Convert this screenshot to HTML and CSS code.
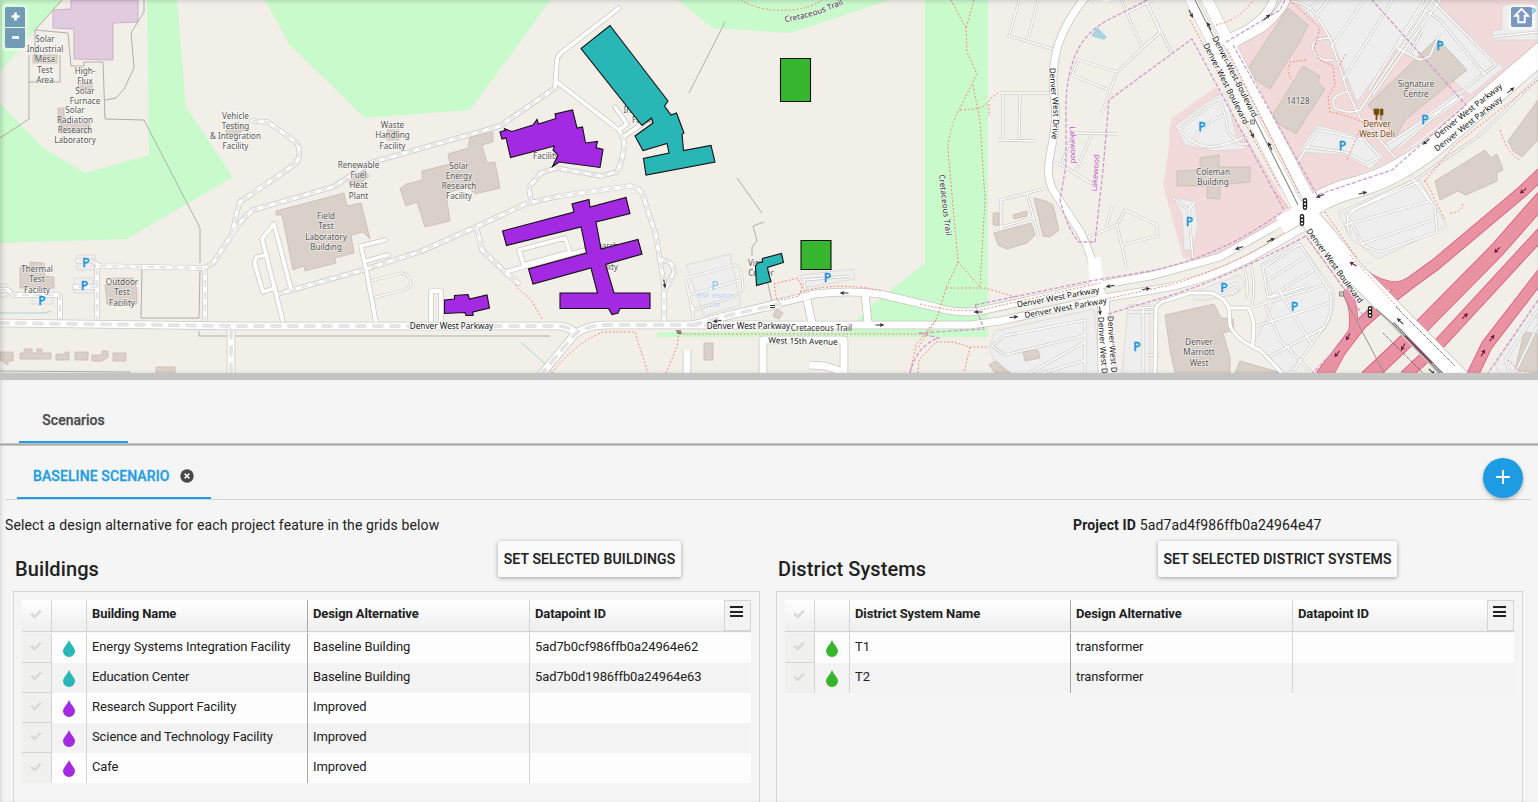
FILE: index.html
```html
<!DOCTYPE html>
<html lang="en">
<head>
<meta charset="utf-8">
<title>Scenarios</title>
<link rel="stylesheet" href="styles.css">
</head>
<body>
<section class="map">
<svg class="map-canvas" width="1538" height="373" viewBox="0 0 1538 373">
<defs>
<g id="arrow"><path d="M-4.5 0H1" stroke="#333" fill="none"/><path d="M4.500 0L0 -2L.6 0L0 2z" fill="#333"/></g>
<g id="ramp-arrow"><path d="M-4 0H1" stroke="#6d1439" fill="none"/><path d="M4 0L0 -2.300L.6 0L0 2.300z" fill="#6d1439"/></g>
<g id="signal"><rect x="-2.200" y="-6" width="4.400" height="12" rx="2" fill="#222"/><circle r="1.100" cy="-3.500" fill="#fff"/><circle r="1.100" fill="#fff"/><circle r="1.100" cy="3.500" fill="#fff"/></g>
<g id="service">
<path d="M274 224L262 239L276 294L283 322M274 224L291 289M267 255L257 257Q254 260 255 265L263 292L275 288"/>
<path d="M376 322L366 269L361 246L385 240M366 261L388 255"/>
<path d="M431 322V291H441V322M505 272L600 246M523 263L519 250L565 238L570 252L523 265"/>
<path d="M555 88L557 60Q558 55 561 53L619 8M557 82L619 130L627 124L615 107M623 137L645 122"/>
</g>
<g id="gated">
<path d="M252 121L268 122L297 143Q300 149 299 156Q298 162 294 165L240 202Q236 212 233 232"/>
<path d="M555 88L500 126L370 163L333 187L253 210Q240 220 229 239L213 263L205 268L100 266L92 261H78M205 268V323M97 268V320M97 287H75M0 290H8L14 295H60V320"/>
<path d="M278 294L363 270L422 251L476 227L525 204L560 196L630 186Q639 187 643 195L656 236L664 285V322M663 260Q674 262 674 272L665 290"/>
<path d="M531 202L529 187L541 173L556 168L601 176L617 172Q624 160 624 140L619 130"/>
<path d="M477 229L482 250L505 272L518 283"/>
</g>
<g id="thin">
<path d="M370 281L402 273Q410 274 411 285L405 290L372 298"/>
<path d="M687 278L735 265Q742 264 743 290Q742 296 692 310L686 280M690 295L740 280M693 322V306M804 280L850 276M804 281L807 300"/>
<path d="M1019 0L1009 36L1053 49M1038 0L1028 39M1000 93H1052M1003 93V139M1020 93L1019 139M997 140L1035 141M1001 200L1047 188M1001 199V229M994 229L1033 218M1027 194L1039 237"/>
<path d="M1121 0L1142 47M1126 13L1153 0M1147 3L1160 32L1117 72L1078 60L1072 75L1109 90M1116 74L1102 113M1076 133L1117 134M1073 133L1062 163M1092 134L1075 173L1094 185L1060 164L1050 161"/>
<path d="M1088 237L1117 225L1125 210L1157 225V236L1122 245M1117 225L1127 269M1112 206L1106 228"/>
<path d="M1145 0L1172 54M1140 50L1160 32"/>
<path d="M1180 129L1210 105L1218 99Q1225 108 1228 132L1239 144H1248M1180 129Q1190 145 1210 147Q1230 145 1248 135M1193 141Q1205 120 1223 116"/>
<path d="M1190 205L1189 215L1193 260M1173 198L1189 210L1195 202"/>
<path d="M1286 0Q1312 4 1318 18L1330 38L1347 90L1360 118L1395 157M1330 38Q1308 38 1314 52Q1320 62 1333 60M1347 92Q1328 96 1335 108Q1350 115 1360 110L1433 0M1343 80L1392 0M1331 47L1364 0M1369 90L1424 0M1373 95L1440 0M1316 15L1328 0M1305 12L1319 0"/>
<path d="M1397 48L1420 60L1430 56L1440 33M1397 48L1422 8L1440 20L1485 75M1422 8L1428 0M1432 0L1496 65L1478 78L1398 148M1410 53L1422 31M1387 144L1462 96M1493 37L1538 32M1507 16L1515 6"/>
<path d="M1292 171L1307 147L1318 130L1365 140L1380 157L1367 163L1345 152L1307 147"/>
<path d="M1345 212L1364 246L1380 252L1437 232L1435 208L1418 182L1358 208Q1342 215 1350 235M1345 225L1430 201M1361 244L1433 220M1350 211L1415 180L1480 135L1538 78M1410 175L1428 200"/>
<path d="M1263 268L1300 244L1330 292Q1335 315 1320 332L1292 373M1263 268L1268 298L1314 270M1268 280L1304 258M1268 298L1310 285M1279 290L1312 345M1253 307L1324 285M1253 327L1329 303M1267 358L1325 327M1265 305L1280 340L1312 373M1241 260Q1250 280 1246 300M1248 258Q1257 280 1252 305"/>
<path d="M992 346L1004 336L1085 320L1085 373M992 346L1005 355L1086 335M1030 373L1085 342M1042 373L1086 360M1128 312H1155L1156 373M1143 307V373M1147 355H1160"/>
<path d="M1538 310L1505 360L1510 373M1538 325L1515 373M1140 308L1155 307M1222 290L1236 283L1238 290L1218 297"/>
</g>
<g id="lots-road"><path d="M1155 373L1156 309Q1158 302 1168 300L1190 293H1212Q1228 300 1229 310L1230 325Q1235 340 1260 350L1282 373M1229 308H1248Q1257 320 1252 348"/></g>
<g id="parkway-gated"><path d="M0 323L240 326H560Q568 327 575 332M540 376L575 334Q585 326 605 325L760 325M231 330V376M693 325L730 315L780 304"/></g>
<g id="residential"><path d="M687 376V350M763 376V340H844V373M809 365L825 366L844 372"/></g>
<g id="parkway"><path d="M735 314L815 294Q850 290 880 294L935 307Q955 314 980 311L1100 285L1150 276L1220 257L1300 212M735 325H970L1000 321L1110 297L1170 287Q1210 278 1250 258L1308 225M865 294L868 323M807 300L812 323"/></g>
<g id="drive"><path d="M1094 -10L1083 0Q1066 22 1058 45Q1051 70 1054 95Q1058 120 1051 150Q1045 175 1053 190L1081 233Q1092 255 1098 285L1105 300L1111 376M1101 290L1102 376"/></g>
<g id="motorway"><path d="M1321 376L1360 325Q1388 298 1435 265L1523 191L1548 167M1405 376L1440 343L1465 316L1548 226M1471 378L1487 345L1548 266"/></g>
<g id="ramps"><path d="M1351 260Q1370 285 1397 286Q1415 282 1440 262L1544 171M1345 290Q1356 305 1353 330L1330 373"/></g>
<path id="motorway-wide" d="M1367 378L1423 325L1497 250L1548 192"/>
</defs>
<rect width="1538" height="373" fill="#f2efe9"/>
<g fill="#c8facc">
<path d="M0 0H62L35 30L0 72zM147 0H177L186 107L233 177L127 239L0 243V103L42 147L85 173L149 155zM265 0L289 44L365 118L470 110L551 0zM678 0L712 28L791 33L889 0zM925 0H988V337H657V332H845L868 308L925 263z"/>
</g>
<path d="M1285 0H1538V45L1395 160L1310 195L1227 50zM1216 87L1172 118Q1168 130 1170 140L1163 185L1183 258L1195 261Q1245 246 1290 210z" fill="#f2dada"/>
<g fill="#eee" stroke="#ddd0d0" stroke-width=".7">
<path d="M686 265L730 254L741 305L704 316zM800 275L853 269L855 279L803 288zM77 255H95V270H77zM74 278H93V293H74zM0 284H8V297H0zM32 297H53V304H32z"/>
<path d="M1175 126L1214 97L1226 92L1236 136L1247 149L1215 151L1185 145L1180 135zM1173 197L1195 202L1198 225L1193 250H1184L1182 215zM1294 0H1435L1503 68L1470 95L1450 78L1440 45L1420 62L1395 50L1357 102L1330 35zM1502 5H1538V40H1493V30H1502zM1305 142L1318 125L1365 138L1384 156L1370 169L1345 155L1300 152zM1385 145L1460 90L1465 98L1390 151z"/>
<path d="M1338 212L1418 177L1447 226L1378 259L1350 238zM1260 265L1298 240L1334 290Q1337 318 1320 335L1285 376L1253 345L1275 300zM995 331L1094 309L1100 376H1000L989 348zM1128 305L1150 304V376H1122zM1194 292L1240 275L1245 285L1235 295L1205 300H1194zM1495 365L1530 313L1538 318V350L1515 376H1500z"/>
</g>
<path d="M71 0H138V22L113 23V60L74 59V29L53 28V10L71 9z" fill="#e1cbdf" stroke="#cdafc9"/>
<g class="building">
<path d="M33 55H57V63H33zM78 83H92V89H78zM58 108H64V123H58zM60 123H90V133H60zM226 130L236 122L246 129L237 134H226zM349 182L364 170L369 176L356 188L349 184zM387 130H399V140H387z"/>
<path d="M276 211L344 193L347 206L361 203L370 239L363 232L351 235L354 253L335 258L336 263L305 271L304 266L293 270L282 215H276zM400 189L406 184L422 180V171L450 164L448 154L468 148L470 137L493 132V142L482 145L487 163L495 162L500 188L475 194L468 187L446 193L450 221L425 227L417 202L406 206z"/>
<path d="M20 267H30V262L44 263L45 276L54 277V288H20zM105 285H113V278H133L137 290V304H107zM0 352H13V361H8V365L0 360zM20 353H24V349H32V353H37V349H42V353H51V359H20zM56 354H65V352H69V360H56zM75 352H88V360H75zM92 355H102V351H108V357L102 361H92zM113 353H126V361H113zM156 367H175V373H156zM704 343H713V360H704zM773 314L777 309L783 313L779 319L774 317z"/>
<path d="M994 233L1031 223L1035 235L1027 243L1007 249L998 245zM1034 198L1046 201L1053 205L1059 230L1050 237L1043 236zM993 213H999V225H993zM1013 215L1027 211V216L1014 219zM1023 352L1038 350L1040 358L1025 361zM989 365L996 361L1010 373H995z"/>
<path d="M1288 8L1308 25L1302 38L1270 89L1245 73zM1303 66L1320 76L1318 82L1325 89L1296 134L1270 119zM1177 171L1200 170V158L1219 155V167H1250V182L1220 185V199L1207 198V186H1177zM1368 105L1437 38L1467 70L1405 120L1396 137zM1435 181L1485 150L1491 158L1497 154L1503 170L1497 173V181L1466 195L1458 191L1440 200zM1508 141L1538 100V140L1522 157L1513 151zM1165 315L1214 304L1221 318L1233 319L1234 330L1223 333L1230 357V373H1175L1170 350zM1240 361L1282 373H1235zM1524 332L1538 334V373L1515 370z"/>
</g>
<g fill="none" stroke="#aaa79f" stroke-width=".9">
<path d="M62 0L35 30L68 33L71 66H84V62H103L105 119L144 120L200 228V263M144 0V12L131 33L134 68L124 89L116 98L105 100M29 55V119L0 138M29 82H60V55M35 30V60M142 269L141 318H199L200 269M199 331V336H550M725 22L689 93M737 178L762 213M764 222L753 226L757 241L752 247V256M767 280L773 306M0 371L130 372"/>
</g>
<path d="M0 313H45L51 311M521 342L545 364L552 373" fill="none" stroke="#aad3df"/>
<path d="M1091 36L1097 27L1107 37L1104 40z" fill="#aad3df"/>
<use href="#motorway" class="motorway-case"/><use href="#motorway-wide" class="wide-case"/><use href="#ramps" class="ramp-case"/>
<use href="#motorway" class="motorway-fill"/><use href="#motorway-wide" class="wide-fill"/><use href="#ramps" class="ramp-fill"/>
<use href="#thin" class="thin-case"/><use href="#thin" class="thin-fill"/>
<use href="#gated" class="road-case"/><use href="#service" class="road-case"/><use href="#gated" class="road-fill"/><use href="#service" class="road-fill"/><use href="#gated" class="road-dash"/>
<use href="#lots-road" class="lot-case"/><use href="#lots-road" class="lot-fill"/>
<use href="#residential" class="main-case"/><use href="#parkway-gated" class="main-case"/><use href="#drive" class="main-case"/><use href="#parkway" class="main-case"/>
<use href="#residential" class="main-fill"/><use href="#parkway-gated" class="main-fill"/><use href="#drive" class="main-fill"/><use href="#parkway" class="main-fill"/>
<use href="#parkway-gated" class="main-dash"/>
<path d="M1094 258L1097 285" stroke="#fff" stroke-width="13"/>
<path d="M1099 -2Q1106 5 1114 -2z" fill="#fff"/>
<g fill="none" stroke="#c4c2bd">
<path d="M1215 44L1242 32Q1268 18 1274 -2M1226 48L1262 28Q1282 12 1288 -4" stroke-width="9"/>
<path d="M1187 -8L1298 208M1203 -8L1314 208" stroke-width="12"/>
<path d="M1305 212Q1316 200 1345 190Q1400 178 1450 132L1545 50" stroke-width="22"/>
<path d="M1302 210Q1330 240 1350 268L1372 290L1460 380" stroke-width="22"/>
</g>
<g fill="none" stroke="#fff">
<path d="M1215 44L1242 32Q1268 18 1274 -2M1226 48L1262 28Q1282 12 1288 -4" stroke-width="7.500"/>
<path d="M1187 -8L1298 208M1203 -8L1314 208" stroke-width="11"/>
<path d="M1305 212Q1316 200 1345 190Q1400 178 1450 132L1545 50" stroke-width="20.500"/>
<path d="M1302 210Q1330 240 1350 268L1372 290L1460 380" stroke-width="20.500"/>
<path d="M1280 225L1310 208" stroke-width="18"/>
</g>
<path d="M1195 0L1298 205M1376 309L1393 324" fill="none" stroke="#8c8a86" stroke-width="1.100"/>
<path d="M1396 307L1455 366M1383 333L1425 375" fill="none" stroke="#444" stroke-dasharray="1 1"/>
<path d="M1393 323L1443 375" stroke="#777" stroke-width="3"/><path d="M1393 323L1443 375" stroke="#ddd" stroke-width="1"/>
<path d="M1405 336L1432 363" stroke="#8c3156" stroke-width="1.600"/>
<path d="M1343 295L1384 373" stroke="#99908c" stroke-width="1"/>
<g fill="none" stroke="#fa8072" stroke-width="1" stroke-dasharray="1.800 2">
<path d="M741 0Q760 12 790 10Q810 9 822 0M951 0L966 28L967 52L977 74L960 108Q948 130 948 150L958 262L946 288L937 318L916 345L910 373M974 0L966 28M973 85L980 120L985 200L980 287M960 110Q986 110 990 99L999 92M989 104V116M958 262L980 287M946 288H985L1015 297M936 320L918 348M918 373L919 360L936 342H953L970 347H988M970 347L964 373"/>
<path d="M515 285L531 300L543 320M552 373Q575 343 603 332H635L648 373M679 332L677 347L666 373M679 334H930M774 284L798 278L802 288L799 296L777 301zM800 292Q840 281 882 291M920 304Q960 314 985 309L1100 283M1102 300L1170 285Q1240 264 1285 232"/>
<path d="M1190 20L1280 188M1227 49L1300 195M1290 0L1320 28L1314 50L1320 60L1333 66L1335 85L1328 97L1330 112Q1350 115 1375 128M1306 60L1290 62L1288 70L1291 80M1216 25Q1240 20 1253 0M1346 54L1338 68M1360 130L1347 160M1325 212L1357 258M1305 235L1345 290M1425 180L1445 220M1450 213Q1463 212 1463 202M1538 80L1455 145L1424 182M1500 130Q1508 155 1520 160M1275 192L1290 210M1350 255L1400 310M1508 360L1522 373"/>
</g>
<g fill="none" stroke="#cf9bcb" stroke-width="1.300" stroke-dasharray="4 1.800">
<path d="M1147 0L1108 20Q1080 35 1072 65Q1065 85 1066 120V165L1060 200Q1068 230 1079 242H1095L1103 170L1109 100L1192 39L1284 210M1226 42L1280 10L1285 0M1233 45L1317 195L1392 170L1466 105L1372 0M975 305L1090 281L1150 271Q1220 257 1282 212M975 305L984 329L918 333L939 338Q917 345 910 373M1108 314L1155 300Q1215 284 1306 236L1365 318L1310 376M1110 315L1117 373M1538 300L1488 373"/>
</g>
<g class="label">
<text x="45" y="42">Solar</text><text x="45" y="52">Industrial</text><text x="45" y="62">Mesa</text><text x="45" y="72.500">Test</text><text x="45" y="82.500">Area</text>
<text x="85" y="74">High-</text><text x="85" y="84">Flux</text><text x="85" y="94">Solar</text><text x="85" y="104">Furnace</text>
<text x="75" y="113">Solar</text><text x="75" y="123">Radiation</text><text x="75" y="133">Research</text><text x="75" y="143">Laboratory</text>
<text x="235.500" y="118.500">Vehicle</text><text x="235.500" y="128.500">Testing</text><text x="235.500" y="138.500">&amp; Integration</text><text x="235.500" y="149">Facility</text>
<text x="392.500" y="128">Waste</text><text x="392.500" y="138">Handling</text><text x="392.500" y="148.500">Facility</text>
<text x="358.500" y="168">Renewable</text><text x="358.500" y="178">Fuel</text><text x="358.500" y="188">Heat</text><text x="358.500" y="198.500">Plant</text>
<text x="459" y="169">Solar</text><text x="459" y="179">Energy</text><text x="459" y="189">Research</text><text x="459" y="199">Facility</text>
<text x="326" y="219">Field</text><text x="326" y="229">Test</text><text x="326" y="239.500">Laboratory</text><text x="326" y="249.500">Building</text>
<text x="37" y="272">Thermal</text><text x="37" y="282">Test</text><text x="37" y="292.500">Facility</text>
<text x="122" y="285">Outdoor</text><text x="122" y="295">Test</text><text x="122" y="305.500">Facility</text>
<text x="546" y="159">Facility</text><text x="645" y="113">Integration</text><text x="645" y="123">Facility</text>
<text x="601" y="249">Research</text><text x="605" y="270">Facility</text>
<text x="760" y="266">Visitor</text><text x="761" y="276">Center</text>
<text x="1213" y="174.500">Coleman</text><text x="1213" y="184.500">Building</text><text x="1298" y="104">14128</text>
<text x="1416" y="86.500">Signature</text><text x="1416" y="96.500">Centre</text>
<text x="1199" y="345">Denver</text><text x="1199" y="355">Marriott</text><text x="1199" y="365.500">West</text>
<text class="deli" x="1377" y="127">Denver</text><text class="deli" x="1377" y="137">West Deli</text>
<text class="lot" x="715" y="298">RSF Visitor</text><text class="lot" x="715" y="307">Lot</text>
</g>
<g class="parking">
<text x="86" y="267">P</text><text x="84.500" y="289.500">P</text><text x="42" y="305">P</text><text class="faded" x="715" y="290">P</text><text x="827.500" y="282">P</text><text x="1137" y="351">P</text><text x="1202" y="130.500">P</text><text x="1342.500" y="150">P</text><text x="1425" y="123.500">P</text><text x="1440" y="49.500">P</text><text x="1532" y="17">P</text><text x="1189.500" y="226">P</text><text x="1224" y="292">P</text><text x="1294.500" y="311">P</text>
</g>
<path d="M1374 109V113Q1374 115 1376 115V120H1377V115Q1379 115 1379 113V109zM1381 109V120M1380.500 109H1383V115H1380.500z" fill="#734a08" stroke="#734a08" stroke-width=".7"/>
<g class="street">
<path id="drive-line" d="M1049.500 68Q1050 85 1053 105Q1054 120 1051 144" fill="none"/>
<path id="trail-line" d="M939 175Q942 205 947 242" fill="none"/>
<path id="trail-top" d="M785 22Q815 18 850 1" fill="none"/>
<text x="451.500" y="328.500">Denver West Parkway</text><text x="748.500" y="328.500">Denver West Parkway</text><text x="821.500" y="330.500" class="path-name">Cretaceous Trail</text>
<text transform="translate(803 344) rotate(1.500)">West 15th Avenue</text>
<text transform="translate(1058.500 300) rotate(-10.500)">Denver West Parkway</text><text transform="translate(1066 310.500) rotate(-10.500)">Denver West Parkway</text>
<text class="from-start"><textPath href="#drive-line">Denver West Drive</textPath></text>
<text class="from-start path-name"><textPath href="#trail-line">Cretaceous Trail</textPath></text>
<text class="from-start path-name"><textPath href="#trail-top">Cretaceous Trail</textPath></text>
<text transform="translate(1223.500 85) rotate(63)">Denver West Boulevard</text><text transform="translate(1232.500 78) rotate(63)">Denver West Boulevard</text>
<text transform="translate(1332.500 267.500) rotate(54)">Denver West Boulevard</text>
<text transform="translate(1470 113) rotate(-38)">Denver West Parkway</text><text transform="translate(1470 126) rotate(-38)">Denver West Parkway</text>
<text class="from-start" transform="translate(1098 317) rotate(86)">Denver West Drive</text><text class="from-start" transform="translate(1107.500 316) rotate(86)">Denver West Drive</text>
<text class="suburb" transform="translate(1070.500 145) rotate(88)">Lakewood</text><text class="suburb" transform="translate(1098 173) rotate(-86)">Lakewood</text>
</g>
<g>
<use href="#arrow" transform="translate(717 321) rotate(170)"/><use href="#arrow" transform="translate(664.500 284) rotate(80)"/><use href="#arrow" transform="translate(844 293) rotate(180)"/><use href="#arrow" transform="translate(880 325)"/><use href="#arrow" transform="translate(978 312) rotate(180)"/><use href="#arrow" transform="translate(1014 317) rotate(-5)"/><use href="#arrow" transform="translate(1110 286) rotate(170)"/><use href="#arrow" transform="translate(1146 289) rotate(-8)"/><use href="#arrow" transform="translate(1100 311) rotate(86)"/><use href="#arrow" transform="translate(1191 14) rotate(63)"/><use href="#arrow" transform="translate(1209 26) rotate(243)"/><use href="#arrow" transform="translate(1267 17) rotate(-38)"/><use href="#arrow" transform="translate(1252 134) rotate(63)"/><use href="#arrow" transform="translate(1270 146) rotate(243)"/><use href="#arrow" transform="translate(1320 196) rotate(160)"/><use href="#arrow" transform="translate(1363 193) rotate(-12)"/><use href="#arrow" transform="translate(1426 142) rotate(142)"/><use href="#arrow" transform="translate(1511 90) rotate(-38)"/><use href="#arrow" transform="translate(1239 248) rotate(160)"/><use href="#arrow" transform="translate(1271 240) rotate(-25)"/><use href="#arrow" transform="translate(1400 321) rotate(223)"/><use href="#arrow" transform="translate(1432 372) rotate(44)"/>
<use href="#ramp-arrow" transform="translate(1523 191) rotate(142)"/><use href="#ramp-arrow" transform="translate(1497 250) rotate(137)"/><use href="#ramp-arrow" transform="translate(1465 316) rotate(-43)"/><use href="#ramp-arrow" transform="translate(1492 338) rotate(-52)"/><use href="#ramp-arrow" transform="translate(1483 353) rotate(-60)"/><use href="#ramp-arrow" transform="translate(1353 264) rotate(210)"/><use href="#ramp-arrow" transform="translate(1348 337) rotate(120)"/><use href="#ramp-arrow" transform="translate(1337 354) rotate(130)"/><use href="#ramp-arrow" transform="translate(1403 347) rotate(120)"/>
<use href="#signal" transform="translate(1305 204)"/><use href="#signal" transform="translate(1302 220)"/><use href="#signal" transform="translate(1370 312)"/>
<path d="M676 331H681M677 333H682M770 305.500H775M770 307.500H775" stroke="#333"/>
<rect x="1250.500" y="120" width="4" height="4" fill="#ccc" stroke="#888"/><rect x="1339.500" y="292" width="4" height="4" fill="#ccc" stroke="#888"/>
</g>
<g class="feature">
<path class="teal" d="M610 25.500L668 101L664.500 106L671 115L676.500 113L684 133L682 134L683.500 150.500L711 145.500L715 162L646 175L643.500 158.500L669 153L667 143.500L643 150.500L635 136L653 123L651.500 118L642 125.500L581 48.500z"/>
<path class="teal" d="M755.500 266L757.500 263L762.500 262V258.500L781.500 253.500L783.500 262.500L767.500 267.500L768.500 273L771 281.500L756.500 285.500z"/>
<path class="purple" d="M500 132L506 130L504 128.500L512 131.500L533 125L537 119.500L538.500 124L556 118.500L555 114L572.500 110L577 128L582.500 127L585.500 143L597.500 141.500L596 147.500L603 149.500L600 167.500L559 162L552.500 166.500L558 155L553 150L554.500 146L510.500 157.500L506 138L502 139z"/>
<path class="purple" d="M502.500 231L574 212L572 204L589 199.500L590 207L626 197.500L630 213.500L596 222L601 249L638 239.500L642 254L605.500 264.500L614 293H650V308.500H620L618 313L612 314.500L608.500 308.500H560V293H597.500L591 268L533 284L528.500 269L586.500 253L581 227L506.500 245.500z"/>
<path class="purple" d="M444.500 300L454.500 299V295.500L468 294.500L469.500 299L487 295L489.500 308L473 312V315.500H466L465 312.500L444.500 313.500z"/>
<path class="green" d="M780.500 58.500H810.500V101.500H780.500zM801 240.500H831V269.500H801z"/>
</g>
</svg>
<div class="zoom-control"><button class="zoom-in" aria-label="Zoom in"><svg width="9" height="9"><path d="M0.500 4.500H8.500M4.500 .5V8.500"/></svg></button><button class="zoom-out" aria-label="Zoom out"><svg width="9" height="9"><path d="M1 4.500H8"/></svg></button></div>
<div class="north-control"><svg width="21" height="20"><path d="M10.500 1.800L17 8.700H13.700V15.200H7.300V8.700H4z" fill="none" stroke="#fff" stroke-width="1.900"/></svg></div>
</section>
<div class="splitter"></div>
<main class="panel">
<nav class="main-tabs"><span class="main-tab">Scenarios</span></nav>
<nav class="scenario-tabs">
<span class="scenario-tab">BASELINE SCENARIO<svg class="close" width="14" height="14"><circle cx="7" cy="7" r="6.700" fill="#484848"/><path d="M4.600 4.600L9.400 9.400M9.400 4.600L4.600 9.400" stroke="#fff" stroke-width="1.500"/></svg></span>
<button class="add" aria-label="Add"><svg width="14" height="14"><path d="M0 7H14M7 0V14" stroke="#fff" stroke-width="2"/></svg></button>
</nav>
<div class="intro"><span>Select a design alternative for each project feature in the grids below</span><span class="project"><b>Project ID</b> 5ad7ad4f986ffb0a24964e47</span></div>
<div class="columns">
<section class="column">
<header class="column-head"><h2>Buildings</h2><button class="set set-buildings">SET SELECTED BUILDINGS</button></header>
<div class="grid-box"><table class="grid">
<colgroup><col class="c-check"><col class="c-icon"><col class="c-name"><col class="c-alt"><col class="c-id"></colgroup>
<thead><tr><th><svg class="check" width="12" height="10"><use href="#tick"/></svg></th><th></th><th>Building Name</th><th>Design Alternative</th><th class="last">Datapoint ID<i class="menu"></i></th></tr></thead>
<tbody>
<tr><td><svg class="check" width="12" height="10"><use href="#tick"/></svg></td><td><svg class="drop teal" width="12" height="17"><use href="#drop"/></svg></td><td>Energy Systems Integration Facility</td><td>Baseline Building</td><td>5ad7b0cf986ffb0a24964e62</td></tr>
<tr><td><svg class="check" width="12" height="10"><use href="#tick"/></svg></td><td><svg class="drop teal" width="12" height="17"><use href="#drop"/></svg></td><td>Education Center</td><td>Baseline Building</td><td>5ad7b0d1986ffb0a24964e63</td></tr>
<tr><td><svg class="check" width="12" height="10"><use href="#tick"/></svg></td><td><svg class="drop purple" width="12" height="17"><use href="#drop"/></svg></td><td>Research Support Facility</td><td>Improved</td><td></td></tr>
<tr><td><svg class="check" width="12" height="10"><use href="#tick"/></svg></td><td><svg class="drop purple" width="12" height="17"><use href="#drop"/></svg></td><td>Science and Technology Facility</td><td>Improved</td><td></td></tr>
<tr><td><svg class="check" width="12" height="10"><use href="#tick"/></svg></td><td><svg class="drop purple" width="12" height="17"><use href="#drop"/></svg></td><td>Cafe</td><td>Improved</td><td></td></tr>
</tbody></table></div>
</section>
<section class="column">
<header class="column-head"><h2>District Systems</h2><button class="set set-systems">SET SELECTED DISTRICT SYSTEMS</button></header>
<div class="grid-box"><table class="grid">
<colgroup><col class="c-check"><col class="c-icon"><col class="c-name"><col class="c-alt"><col class="c-id"></colgroup>
<thead><tr><th><svg class="check" width="12" height="10"><use href="#tick"/></svg></th><th></th><th>District System Name</th><th>Design Alternative</th><th class="last">Datapoint ID<i class="menu"></i></th></tr></thead>
<tbody>
<tr><td><svg class="check" width="12" height="10"><use href="#tick"/></svg></td><td><svg class="drop green" width="12" height="17"><use href="#drop"/></svg></td><td>T1</td><td>transformer</td><td></td></tr>
<tr><td><svg class="check" width="12" height="10"><use href="#tick"/></svg></td><td><svg class="drop green" width="12" height="17"><use href="#drop"/></svg></td><td>T2</td><td>transformer</td><td></td></tr>
</tbody></table></div>
</section>
</div>
</main>
<svg class="sprites" width="0" height="0"><defs><path id="tick" d="M1.200 4.700L4.600 8L10.800 1.600" fill="none" stroke-width="2.500"/><path id="drop" d="M6 0Q6.600 2 9.700 6Q12 9 12 11A6 6 0 0 1 0 11Q0 9 2.300 6Q5.400 2 6 0z"/></defs></svg>
</body>
</html>
```
FILE: styles.css
```css
* { box-sizing: border-box; }
body { margin: 0; width: 1538px; height: 802px; overflow: hidden; display: flex; flex-direction: column; background: #f5f5f5; color: #212121; font-family: Roboto, sans-serif; font-size: 14px; position: relative; }
button { font: inherit; border: 0; padding: 0; }
.map { position: relative; flex: none; height: 373px; overflow: hidden; }
.map::after { content: ""; position: absolute; inset: 0; box-shadow: inset 2px 1px 5px rgba(0,0,0,.16); pointer-events: none; }
.map-canvas { display: block; }
.building { fill: #d9d0c9; stroke: #c9bbb0; stroke-width: .8; }
.motorway-case, .wide-case, .ramp-case { fill: none; stroke: #e0507f; }
.motorway-fill, .wide-fill, .ramp-fill { fill: none; stroke: #e892a2; }
.motorway-case { stroke-width: 12; }
.motorway-fill { stroke-width: 10.5; }
.wide-case { stroke-width: 15.5; }
.wide-fill { stroke-width: 14; }
.ramp-case { stroke-width: 9; }
.ramp-fill { stroke-width: 8; }
.thin-case, .thin-fill, .road-case, .road-fill, .road-dash, .main-case, .main-fill, .main-dash, .lot-case, .lot-fill { fill: none; stroke-linejoin: round; }
.thin-case { stroke: #c9c7c2; stroke-width: 2.8; }
.thin-fill { stroke: #fff; stroke-width: 1.5; }
.road-case { stroke: #c8c6c1; stroke-width: 5.2; stroke-linecap: round; }
.road-fill { stroke: #fff; stroke-width: 3.8; stroke-linecap: round; }
.road-dash { stroke: #e6e6e6; stroke-width: 2.4; stroke-dasharray: 7 5; }
.lot-case { stroke: #c8c6c1; stroke-width: 4.4; }
.lot-fill { stroke: #fff; stroke-width: 3.2; }
.main-case { stroke: #c8c6c1; stroke-width: 8.6; }
.main-fill { stroke: #fff; stroke-width: 7; }
.main-dash { stroke: #e5e5e5; stroke-width: 4; stroke-dasharray: 8 9; stroke-linecap: round; }
.label, .street { font-family: "Noto Sans", sans-serif; font-size: 8.2px; text-anchor: middle; paint-order: stroke; stroke-linejoin: round; }
.label { fill: #555; stroke: rgba(255,255,255,.6); stroke-width: 1.5px; font-size: 8.1px; }
.label .deli { fill: #734a08; }
.label .lot { fill: #a7c2ee; font-size: 7.3px; }
.street { fill: #111; stroke: #fff; stroke-width: 1.5px; }
.street path { stroke: none; }
.street .from-start { text-anchor: start; }
.street .path-name { fill: #333; stroke: rgba(255,255,255,.6); }
.street .suburb { fill: #bf5dbc; stroke: #f7eff3; font-size: 7.8px; }
.parking { fill: #1793df; stroke: #1793df; stroke-width: .35px; font: 500 12px "Noto Sans", sans-serif; text-anchor: middle; }
.parking .faded { fill: #8dcbee; stroke: none; }
.feature path { stroke: #111; stroke-width: 1.1; }
.teal { fill: #29b6b6; }
.purple { fill: #a329e2; }
.green { fill: #38b52f; }
.zoom-control { position: absolute; left: 2px; top: 4px; width: 26px; height: 47px; padding: 3px; border-radius: 4px; background: rgba(255,255,255,.4); display: flex; flex-direction: column; gap: 1px; z-index: 1; }
.zoom-control button { width: 20px; height: 20px; background: #729bb6; display: flex; align-items: center; justify-content: center; }
.zoom-control svg { margin-top: -2px; }
.zoom-control .zoom-in { border-radius: 2px 2px 0 0; }
.zoom-control .zoom-out { border-radius: 0 0 2px 2px; }
.zoom-control path { stroke: #fff; stroke-width: 2.7; }
.north-control { position: absolute; left: 1508px; top: 4px; width: 27px; height: 26px; padding: 3px; border-radius: 4px; background: rgba(255,255,255,.45); z-index: 1; }
.north-control svg { display: block; background: #7b98c2; border-radius: 2px; }
.splitter { flex: none; height: 7px; background: #c4c4c4; }
.panel { flex: 1; min-height: 0; box-shadow: inset 3px 0 4px -2px rgba(0,0,0,.15); }
.main-tabs { height: 66px; padding: 17px 0 0 19px; display: flex; background: linear-gradient(#d0d0d0, #a7a7a7 50%, #d7d7d7) 0 63px / 100% 3px no-repeat; }
.main-tab { width: 109px; height: 46px; border-bottom: 2px solid #1e9ee3; font-weight: 500; -webkit-text-stroke: .25px #4b4b4b; color: #4b4b4b; text-align: center; line-height: 46px; }
.scenario-tabs { height: 54px; margin: 0 7px 0 5px; padding: 7px 0 0 12px; border-bottom: 1px solid #d4d4d4; display: flex; justify-content: space-between; }
.scenario-tab { width: 194px; height: 46px; padding: 2px 0 0 16px; border-bottom: 2px solid #1e9ee3; color: #1e9ee3; font-weight: 500; -webkit-text-stroke: .3px #1e9ee3; letter-spacing: .11px; line-height: 44px; display: flex; align-items: center; white-space: nowrap; }
.close { margin-left: 10px; }
.add { width: 40px; height: 40px; margin: 5px 8px 0 0; border-radius: 50%; background: #1e9ce3; display: flex; align-items: center; justify-content: center; box-shadow: 0 2px 4px rgba(0,0,0,.28); }
.add svg { margin-top: -2px; }
.intro { height: 41px; padding: 16px 0 0 5px; line-height: 18px; display: flex; letter-spacing: .13px; }
.intro span:first-child { width: 1068px; }
.columns { display: flex; gap: 16px; padding-left: 13px; }
.column { width: 747px; }
.column-head { height: 50px; padding: 0 0 0 2px; display: flex; align-items: flex-start; }
.column-head h2 { margin: 16px 0 0; width: 483px; font-size: 20px; line-height: 24px; font-weight: 500; letter-spacing: .1px; }
.set { height: 36px; background: #fafafa; color: #212121; font-weight: 500; border-radius: 2px; box-shadow: 0 1px 4px rgba(0,0,0,.36); letter-spacing: .14px; white-space: nowrap; -webkit-text-stroke: .15px #212121; }
.set-buildings { width: 183px; }
.set-systems { width: 239px; margin-left: -103px; }
.grid-box { height: 230px; border: 1px solid #d4d4d4; padding: 8px; }
.grid { table-layout: fixed; width: 729px; border-collapse: separate; border-spacing: 0; font-size: 13px; letter-spacing: -.1px; }
.c-check { width: 30px; }
.c-icon { width: 35px; }
.c-name { width: 221px; }
.c-alt { width: 222px; }
.c-id { width: 221px; }
th, td { padding: 0 5px; text-align: left; border-right: 1px solid #d4d4d4; white-space: nowrap; position: relative; }
th { height: 32px; padding-bottom: 4px; background: linear-gradient(#fff, #eee); border-bottom: 1px solid #d4d4d4; font-weight: 700; }
tbody::before { content: ""; display: block; height: 1px; }
td { height: 30px; padding-bottom: 3px; }
tbody tr:nth-child(odd) td { background: #fdfdfd; }
tbody tr:nth-child(even) td { background: #f3f3f3; }
tbody tr td:first-child { background: #f0f0ee; border-bottom: 1px solid #d4d4d4; }
tbody tr:last-child td:first-child { border-bottom: 0; }
th:nth-child(3), td:nth-child(3) { border-right-color: #a8a8a8; }
th:last-child, td:last-child { border-right: 0; }
th:first-child, td:first-child, th:nth-child(2), td:nth-child(2) { text-align: center; padding-left: 0; padding-right: 0; line-height: 0; }
.check { stroke: #d9d9d9; margin-right: 1px; }
.drop { margin-top: 3px; vertical-align: middle; }
.menu { position: absolute; right: 0; top: 0; width: 27px; height: 31px; border: 1px solid #d4d4d4; background: linear-gradient(#212121, #212121) 4.5px 5px / 13px 2px no-repeat, linear-gradient(#212121, #212121) 4.5px 9.5px / 13px 2px no-repeat, linear-gradient(#212121, #212121) 4.5px 14px / 13px 2px no-repeat, #f3f3f3; }
.sprites { position: absolute; }
```
